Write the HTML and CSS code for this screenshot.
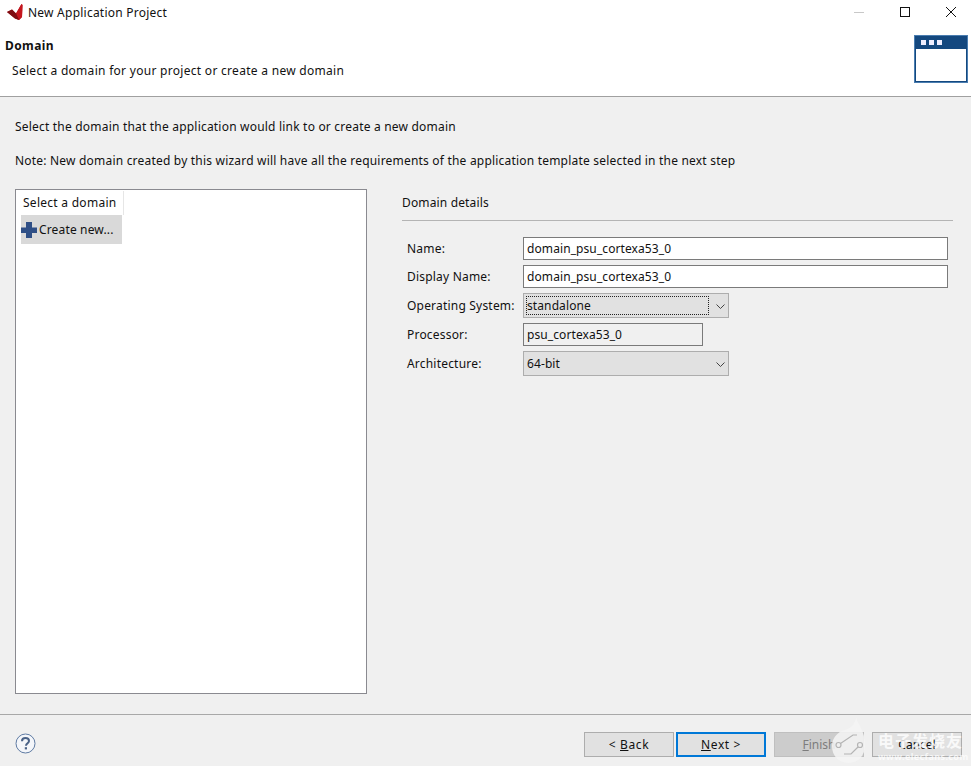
FILE: index.html
```html
<!DOCTYPE html>
<html lang="en">
<head>
<meta charset="utf-8">
<title>New Application Project</title>
<link rel="stylesheet" href="styles.css">
</head>
<body>
<div class="window">
  <div class="top">
    <div class="titlebar">
      <svg class="logo" width="16" height="16" viewBox="0 0 16 16"><path d="M0 8 L5 5.500 L9 9.500 L14.500 0 L15.500 1 L15 13 L12 16 L8 14.500 Z" fill="#b5121b"/><path d="M9 9.500 L14.500 0 L15.500 1 L15 13 L12 16 Z" fill="#c4161e"/><path d="M0 8 L5 5.500 L9 9.500 L12 16 L8 14.500 Z" fill="#7e0d12"/></svg>
      <span class="title">New Application Project</span>
      <div class="controls">
        <svg class="ctl" width="12" height="12" viewBox="0 0 12 12"><path d="M1 6.500H11" stroke="#c8c8c8" fill="none"/></svg>
        <svg class="ctl" width="12" height="12" viewBox="0 0 12 12"><rect x="1.500" y="1.500" width="9" height="9" stroke="#111" fill="none"/></svg>
        <svg class="ctl" width="12" height="12" viewBox="0 0 12 12"><path d="M1 1L11 11M11 1L1 11" stroke="#111" fill="none"/></svg>
      </div>
    </div>
    <div class="banner">
      <div class="banner-text">
        <div class="banner-title">Domain</div>
        <div class="banner-sub">Select a domain for your project or create a new domain</div>
      </div>
      <svg class="wizard" width="54" height="48" viewBox="0 0 54 48"><rect x="0.500" y="0.500" width="53" height="47" fill="#14487f" stroke="#4a7db0"/><rect x="2" y="14" width="50" height="32" fill="#fff"/><rect x="7" y="5" width="5" height="5" fill="#eef"/><rect x="15" y="5" width="5" height="5" fill="#eef"/><rect x="23" y="5" width="5" height="5" fill="#eef"/></svg>
    </div>
  </div>
  <main class="content">
    <p class="line line-first">Select the domain that the application would link to or create a new domain</p>
    <p class="line line-second">Note: New domain created by this wizard will have all the requirements of the application template selected in the next step</p>
    <div class="columns">
      <section class="list">
        <div class="list-head">Select a domain</div>
        <div class="list-row">
          <svg class="plus" width="18" height="16" viewBox="0 0 18 16"><path d="M5 0h6v5.500h5v5.500h-5v5h-6v-5h-5v-5.500h5z" fill="#2f4f86"/></svg>
          <span>Create new...</span>
        </div>
      </section>
      <section class="details">
        <div class="details-head">Domain details</div>
        <div class="form">
          <label class="lbl">Name:</label>
          <div class="field">domain_psu_cortexa53_0</div>
          <label class="lbl">Display Name:</label>
          <div class="field">domain_psu_cortexa53_0</div>
          <label class="lbl">Operating System:</label>
          <div class="combo">
            <span class="focus">standalone</span>
            <svg class="chev" width="9" height="6" viewBox="0 0 9 6"><path d="M0.500 0.500L4.500 4.500L8.500 0.500" stroke="#444" fill="none"/></svg>
          </div>
          <label class="lbl">Processor:</label>
          <div class="field field-ro">psu_cortexa53_0</div>
          <label class="lbl">Architecture:</label>
          <div class="combo">
            <span class="plain">64-bit</span>
            <svg class="chev" width="9" height="6" viewBox="0 0 9 6"><path d="M0.500 0.500L4.500 4.500L8.500 0.500" stroke="#444" fill="none"/></svg>
          </div>
        </div>
      </section>
    </div>
  </main>
  <footer class="footer">
    <svg class="help" width="21" height="21" viewBox="0 0 21 21"><circle cx="10.500" cy="10.500" r="9.500" fill="#f4f6fa" stroke="#5f7ba3"/><path d="M7 8.200C7 5.800 8.800 5 10.500 5C12.500 5 14 6.200 14 8C14 10.300 11 10.300 11 12.800" fill="none" stroke="#4a6287" stroke-width="2"/><rect x="9.800" y="14.200" width="2.200" height="2.200" fill="#4a6287"/></svg>
    <div class="buttons">
      <div class="btn"><span>&lt; <u>B</u>ack</span></div>
      <div class="btn btn-default"><span><u>N</u>ext &gt;</span></div>
      <div class="btn btn-disabled btn-gap"><span><u>F</u>inish</span></div>
      <div class="btn btn-gap"><span class="cancel">Cancel</span></div>
    </div>
  </footer>
  <div class="watermark">
    <svg class="wm-logo" width="34" height="47" viewBox="0 0 34 47"><path d="M24 0C25 6 33 13 33 28C33 39 26 46 16.500 46C7 46 0 39 0 29C0 19 8 14 15 12C20 10.500 23 6 24 0Z" fill="#f4f4f4" fill-opacity="0.88"/><g fill="none" stroke="#b4b4b4" stroke-width="1.200"><circle cx="6.500" cy="28" r="2.500"/><circle cx="28" cy="28" r="2.500"/><path d="M8.500 26.500L21 18L25 18M26 30L19 37L12 37"/></g></svg>
    <div class="wm-text">
      <div class="wm-cn">电子发烧友</div>
      <div class="wm-url">www.elecfans.com</div>
    </div>
  </div>
</div>
</body>
</html>
```
FILE: styles.css
```css
* { box-sizing: border-box; }
html, body { margin: 0; padding: 0; }
body {
  width: 971px;
  height: 766px;
  overflow: hidden;
  font-family: "Noto Sans", "Noto Sans CJK SC", sans-serif;
  font-size: 12px;
  color: #111;
  background: #f0f0f0;
}
.window {
  position: relative;
  width: 971px;
  height: 766px;
  display: flex;
  flex-direction: column;
}
.top {
  height: 97px;
  background: #fff;
  border-bottom: 1px solid #a0a0a0;
  flex: none;
}
.titlebar {
  height: 24px;
  display: flex;
  align-items: center;
  padding-left: 7px;
}
.logo { flex: none; margin-top: -1px; }
.title { margin-left: 5px; letter-spacing: 0.23px; }
.controls {
  margin-left: auto;
  display: flex;
  gap: 34px;
  padding-right: 14px;
}
.banner {
  height: 72px;
  display: flex;
  justify-content: space-between;
  padding-right: 3px;
}
.banner-title {
  margin: 13px 0 0 5px;
  font-weight: 700;
  line-height: 18px;
  letter-spacing: 0.4px;
}
.banner-sub {
  margin: 7px 0 0 12px;
  line-height: 18px;
  letter-spacing: 0.29px;
}
.wizard { margin-top: 11px; }
.content {
  flex: 1;
  padding: 0 18px 0 15px;
  display: flex;
  flex-direction: column;
}
.line { margin: 0; line-height: 18px; letter-spacing: 0.2px; }
.line-first { margin-top: 21px; }
.line-second { margin-top: 16px; }
.columns {
  display: flex;
  margin-top: 19px;
  height: 505px;
}
.list {
  width: 352px;
  flex: none;
  background: #fff;
  border: 1px solid #8a8a90;
  padding: 1px 0 0 5px;
}
.list-head {
  width: 103px;
  height: 24px;
  line-height: 24px;
  padding-left: 2px;
  border-right: 1px solid #e6e6e6;
  letter-spacing: 0.27px;
}
.list-row {
  width: 101px;
  height: 29px;
  background: #d9d9d9;
  display: flex;
  align-items: center;
  letter-spacing: 0.15px;
}
.plus { flex: none; }
.details {
  flex: 1;
  margin-left: 35px;
}
.details-head {
  height: 32px;
  line-height: 28px;
  border-bottom: 1px solid #b4b4b4;
  letter-spacing: 0.15px;
}
.form {
  display: grid;
  grid-template-columns: 116px 425px;
  row-gap: 5px;
  margin-top: 16px;
  padding-left: 5px;
  align-items: center;
}
.lbl { letter-spacing: 0.2px; }
.field {
  height: 23px;
  line-height: 21px;
  padding-left: 3px;
  background: #fff;
  border: 1px solid #7a7a7a;
  letter-spacing: 0.09px;
}
.field-ro {
  width: 180px;
  background: #f0f0f0;
}
.combo {
  position: relative;
  width: 206px;
  height: 25px;
  background: #e1e1e1;
  border: 1px solid #adadad;
  display: flex;
  align-items: center;
  padding: 2px;
}
.focus {
  width: 183px;
  height: 19px;
  line-height: 17px;
  border: 1px dotted #222;
  letter-spacing: 0.1px;
}
.plain { padding-left: 1px; letter-spacing: 0.1px; }
.chev { position: absolute; right: 3px; top: 10px; }
.footer {
  height: 52px;
  flex: none;
  border-top: 1px solid #a8a8a8;
  display: flex;
  justify-content: space-between;
  padding: 17px 9px 0 15px;
}
.help { margin-top: 1px; }
.buttons { display: flex; gap: 2px; }
.btn {
  width: 90px;
  height: 25px;
  background: #e1e1e1;
  border: 1px solid #adadad;
  display: flex;
  align-items: center;
  justify-content: center;
  letter-spacing: 0.6px;
}
.btn-default { border: 2px solid #0078d7; }
.btn-disabled { background: #cccccc; border-color: #bfbfbf; color: #7d7d7d; letter-spacing: 0; }
.btn-gap { margin-left: 6px; }
.cancel { letter-spacing: 0; }
.watermark {
  position: absolute;
  left: 832px;
  top: 717px;
  display: flex;
  color: #fff;
}
.wm-text { margin-left: 12px; padding-top: 14px; width: 90px; }
.wm-cn { font-size: 16px; line-height: 20px; font-weight: 700; letter-spacing: 1px; opacity: 0.8; white-space: nowrap; }
.wm-url { font-size: 9px; line-height: 11px; letter-spacing: 0.4px; font-weight: 700; opacity: 0.75; white-space: nowrap; }
```
